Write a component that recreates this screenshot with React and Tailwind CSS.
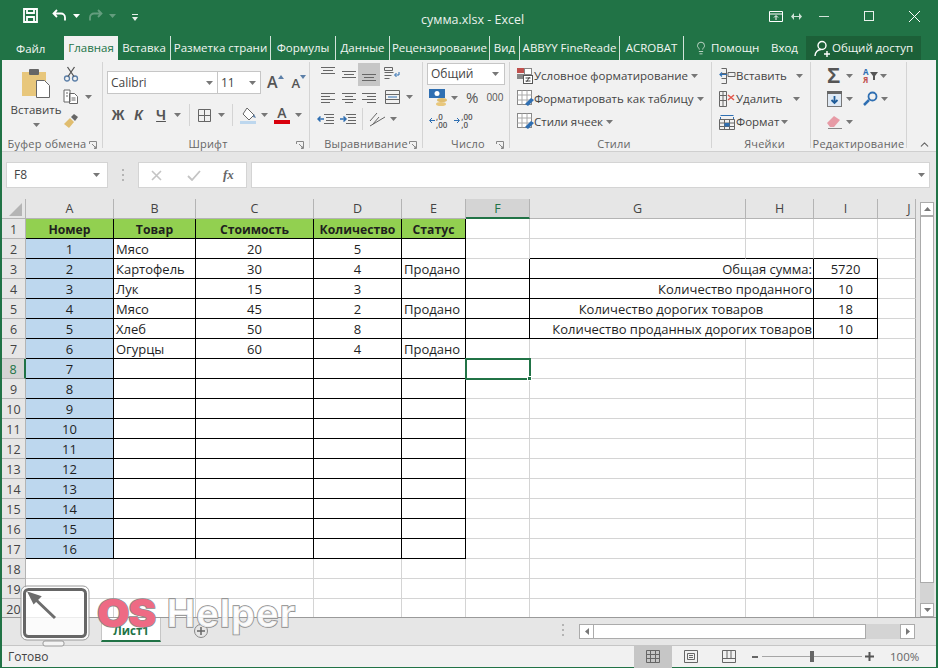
import { Fragment } from 'react'
import { ChevronUp, Lightbulb } from 'lucide-react'

const FONT = "font-['Open_Sans','Noto_Sans',sans-serif]"

const COLS = ['A', 'B', 'C', 'D', 'E', 'F', 'G', 'H', 'I', 'J']
const DATA = [
  ['Мясо', 20, 5, ''],
  ['Картофель', 30, 4, 'Продано'],
  ['Лук', 15, 3, ''],
  ['Мясо', 45, 2, 'Продано'],
  ['Хлеб', 50, 8, ''],
  ['Огурцы', 60, 4, 'Продано'],
]
const SUMMARY = {
  3: ['Общая сумма:', 5720, 'text-right'],
  4: ['Количество проданного', 10, 'text-right'],
  5: ['Количество дорогих товаров', 18, 'text-center'],
  6: ['Количество проданных дорогих товаров', 10, 'text-right'],
}
const HEAD = ['Номер', 'Товар', 'Стоимость', 'Количество', 'Статус']

const Caret = ({ className = '' }) => (
  <svg width="7" height="4" viewBox="0 0 7 4" className={className}><path d="M0 0h7L3.500 4z" fill="#777" /></svg>
)

const Lines = ({ rows, w = 14 }) => (
  <svg width={w} height="13" viewBox={`0 0 ${w} 13`} fill="none" stroke="#666" strokeWidth="1">
    {rows.map(([x1, x2, y], i) => <path key={i} d={`M${x1} ${y}.5H${x2}`} />)}
  </svg>
)

function TitleBar() {
  return (
    <div className="flex h-[36px] items-center bg-[#217346] text-white">
      <div className="-mt-[5px] flex w-[421px] items-center pl-[23px]">
        <svg width="15" height="15" viewBox="0 0 15 15" fill="none" stroke="#fff" strokeWidth="1.800">
          <path d="M1 1h13v13H1zM4 1v4h7V1M4 14V9h7v5" />
        </svg>
        <svg className="ml-[14px]" width="15" height="13" viewBox="0 0 15 13" fill="none" stroke="#fff" strokeWidth="1.800">
          <path d="M5 1L1.500 4.500 5 8M2 4.500h7a4 4 0 0 1 4 4v3" />
        </svg>
        <Caret className="ml-[6px] [&>path]:fill-white" />
        <svg className="ml-[8px] opacity-30" width="15" height="13" viewBox="0 0 15 13" fill="none" stroke="#fff" strokeWidth="1.800">
          <path d="M10 1l3.500 3.500L10 8M13 4.500H6a4 4 0 0 0-4 4v3" />
        </svg>
        <Caret className="ml-[6px] opacity-30 [&>path]:fill-white" />
        <svg className="ml-[16px] mt-[3px]" width="6" height="7" viewBox="0 0 6 7"><path d="M0 0h6v1H0zM0 3h6L3 7z" fill="#e6efe9" /></svg>
      </div>
      <div className={`${FONT} mt-[5px] w-[348px] whitespace-nowrap text-[12.500px] text-[#e9f1ec]`}>сумма.xlsx - Excel</div>
      <div className="-mt-[4px] flex items-center">
        <svg width="14" height="11" viewBox="0 0 14 11" fill="none" stroke="#fff"><path d="M.5.500h13v10H.500zM.5 3h13M7 9V5M5 6.500L7 4.500 9 6.500" /></svg>
        <svg className="ml-[8px]" width="11" height="7" viewBox="0 0 11 7" fill="#cfe0d6"><path d="M0 3.500L3 0v3h5V0l3 3.500L8 7V4H3v3z" /></svg>
        <div className="ml-[17px] h-px w-[10px] bg-white/80" />
        <div className="ml-[35px] h-[10px] w-[10px] border border-white/90" />
        <svg className="ml-[35px]" width="11" height="11" viewBox="0 0 11 11" stroke="#fff"><path d="M0 0l11 11M11 0L0 11" /></svg>
      </div>
    </div>
  )
}

function Tabs() {
  const Tab = ({ w, children }) => (
    <div className={`flex h-[24px] items-center justify-center whitespace-nowrap border-r border-[#d3e3da] ${w}`}>
      {children}
    </div>
  )
  return (
    <div className={`${FONT} flex h-[24px] items-center bg-[#217346] text-[11.500px] text-[#f2f6f3]`}>
      <div className="w-[64px] pl-[16px] pt-[2px]">Файл</div>
      <div className="flex h-[24px] w-[54px] items-center justify-center bg-[#f1f1f1] text-[#217346]">Главная</div>
      <Tab w="w-[53px]">Вставка</Tab>
      <Tab w="w-[100px]">Разметка страни</Tab>
      <Tab w="w-[65px]">Формулы</Tab>
      <Tab w="w-[54px]">Данные</Tab>
      <Tab w="w-[100px]">Рецензирование</Tab>
      <Tab w="w-[30px]">Вид</Tab>
      <Tab w="w-[100px]">ABBYY FineReade</Tab>
      <Tab w="w-[64px]">ACROBAT</Tab>
      <Lightbulb className="ml-[10px] text-[#e8efe9]" size={14} strokeWidth={1.300} />
      <div className="ml-[3px] w-[60px] whitespace-nowrap">Помощн</div>
      <div className="w-[35px]">Вход</div>
      <div className="flex h-[24px] w-[115px] items-center bg-[#1c6038] pl-[8px]">
        <svg width="17" height="17" viewBox="0 0 17 17" fill="none" stroke="#fff" strokeWidth="1.400">
          <circle cx="8" cy="5.500" r="4" /><path d="M1 16c0-4 3-6.500 6-6.500M10 14h6M13 11v6" />
        </svg>
        <span className="ml-[1px] whitespace-nowrap">Общий доступ</span>
      </div>
    </div>
  )
}

const Group = ({ w, label, launcher, children }) => (
  <div className={`flex h-[86px] flex-col border-r border-[#d4d4d4] ${w}`}>
    <div className="h-[72px] shrink-0">{children}</div>
    <div className="relative mt-[2px] shrink-0 text-center text-[11px] leading-[16px] tracking-[0.200px] text-[#666]">
      {label}
      {launcher && (
        <svg className="absolute right-[5px] top-[5px]" width="8" height="8" viewBox="0 0 8 8" fill="none" stroke="#888"><path d="M.5 3V.5H7.500V7.500H5M3 3l4 4M5 7h2V5" /></svg>
      )}
    </div>
  </div>
)

function Clipboard() {
  return (
    <Group w="w-[99px] pl-[6px]" label={<span className="-ml-[6px] block pr-[12px]">Буфер обмена</span>} launcher>
      <div className="flex">
        <div className="flex w-[52px] flex-col items-center">
          <svg className="mt-[6px]" width="29" height="31" viewBox="0 0 29 31">
            <rect x="0" y="4" width="24" height="24" fill="#e8c77c" />
            <rect x="7" y="1" width="10" height="6" rx="1" fill="#666" />
            <path d="M14.500 12.500h8l5 5v12h-13z" fill="#fff" stroke="#666" />
          </svg>
          <div className="mt-[3px] text-[11.500px] leading-[16px] text-[#444]">Вставить</div>
          <Caret className="mt-[5px]" />
        </div>
        <div className="ml-[1px] mt-[4px] flex flex-col">
          <svg width="16" height="16" viewBox="0 0 16 16" fill="none" stroke="#5b7fa8" strokeWidth="1.300">
            <circle cx="4" cy="12.500" r="2.500" /><circle cx="12" cy="12.500" r="2.500" />
            <path d="M5 10.500L11.500 1M11 10.500L4.500 1" stroke="#555" />
          </svg>
          <div className="mt-[7px] flex items-center">
            <svg width="16" height="16" viewBox="0 0 16 16" fill="#fff" stroke="#666"><path d="M1 1h6v12H1zM6.500 4.500h5l3 3v7h-8z" /><path d="M3 4h2M3 7h2M8.500 9h4M8.500 11h4" fill="none" /></svg>
            <Caret className="ml-[6px]" />
          </div>
          <svg className="mt-[8px]" width="16" height="16" viewBox="0 0 16 16">
            <path d="M1 11l6-6 4 4-5 6z" fill="#e0bd6f" /><path d="M8 4l3-3 4 3-3 4z" fill="#666" />
          </svg>
        </div>
      </div>
    </Group>
  )
}

function FontGroup() {
  return (
    <Group w="w-[207px] pl-[4px]" label="Шрифт" launcher>
      <div className="mt-[9px] flex items-start">
        <div className="flex h-[23px] w-[111px] items-center border border-[#c6c6c6] bg-white pl-[3px] text-[12px] text-[#444]">
          Calibri<Caret className="ml-auto mr-[4px]" />
        </div>
        <div className="flex h-[23px] w-[43px] items-center border border-l-0 border-[#c6c6c6] bg-white pl-[3px] text-[12px] text-[#444]">
          11<Caret className="ml-auto mr-[4px]" />
        </div>
        <div className="ml-[6px] flex items-start">
          <span className="text-[16px] font-semibold leading-[22px] text-[#555]">A</span>
          <svg className="mt-[4px]" width="6" height="4" viewBox="0 0 6 4"><path d="M3 0l3 4H0z" fill="#5b7fa8" /></svg>
        </div>
        <div className="ml-[8px] flex items-start">
          <span className="mt-[2px] text-[13px] font-semibold leading-[20px] text-[#555]">A</span>
          <svg className="mt-[4px]" width="6" height="4" viewBox="0 0 6 4"><path d="M0 0h6L3 4z" fill="#5b7fa8" /></svg>
        </div>
      </div>
      <div className="mt-[8px] flex h-[26px] items-center text-[#555]">
        <span className="w-[22px] text-center font-['Liberation_Sans',sans-serif] text-[14px] font-bold">Ж</span>
        <span className="w-[19px] text-center font-['Liberation_Sans',sans-serif] text-[14px] font-bold italic">К</span>
        <span className="w-[26px] text-center font-['Liberation_Sans',sans-serif] text-[14px] font-bold underline">Ч</span>
        <Caret />
        <div className="ml-[8px] h-[22px] w-px bg-[#d4d4d4]" />
        <svg className="ml-[8px]" width="13" height="13" viewBox="0 0 13 13" fill="none" stroke="#666"><path d="M.5.500h12v12H.500zM6.500.500v12M.5 6.500h12" /></svg>
        <Caret className="ml-[7px]" />
        <div className="ml-[7px] h-[22px] w-px bg-[#d4d4d4]" />
        <svg className="ml-[7px]" width="17" height="17" viewBox="0 0 17 17">
          <path d="M7 1l7 7-5 5-6-6z" fill="#fff" stroke="#666" /><path d="M14 7l2 4-3-1z" fill="#5b7fa8" /><rect y="14" width="16" height="3" fill="#bdd7ee" />
        </svg>
        <Caret className="ml-[4px]" />
        <div className="ml-[6px] flex w-[16px] flex-col items-center">
          <span className="text-[14px] font-semibold leading-[14px] text-[#555]">A</span>
          <div className="h-[4px] w-[16px] bg-[#d8000c]" />
        </div>
        <Caret className="ml-[5px]" />
      </div>
    </Group>
  )
}

function Alignment() {
  const Cell = ({ children, className = 'w-[22px]' }) => <div className={`flex h-[22px] items-center justify-center ${className}`}>{children}</div>
  return (
    <Group w="w-[113px]" label="Выравнивание" launcher>
      <div className="ml-[7px] mt-[1px] flex">
        <Cell className="w-[22px] pb-[3px]"><Lines rows={[[0, 14, 1], [2, 12, 4], [0, 14, 7]]} /></Cell>
        <Cell className="w-[19px]"><Lines rows={[[0, 14, 3], [2, 12, 6], [0, 14, 9]]} /></Cell>
        <Cell className="h-[23px] w-[22px] bg-[#c6c6c6]"><Lines rows={[[0, 14, 6], [2, 12, 9], [0, 14, 12]]} /></Cell>
        <Cell className="w-[24px]">
          <svg width="16" height="15" viewBox="0 0 16 15" fill="none" stroke="#666"><path d="M.5.500h8v3h-8zM.5 5.500h9M.5 8.500h7M.5 11.500h5" /><path d="M15 5v3h-4M12.500 6L10.500 8 12.500 10" stroke="#2f6fb2" /></svg>
        </Cell>
      </div>
      <div className="ml-[7px] flex">
        <Cell><Lines rows={[[0, 14, 2], [0, 9, 5], [0, 14, 8], [0, 9, 11]]} /></Cell>
        <Cell className="w-[19px]"><Lines rows={[[0, 14, 2], [3, 11, 5], [0, 14, 8], [3, 11, 11]]} /></Cell>
        <Cell><Lines rows={[[0, 14, 2], [5, 14, 5], [0, 14, 8], [5, 14, 11]]} /></Cell>
        <Cell className="w-[24px]">
          <svg width="15" height="14" viewBox="0 0 15 14" fill="none" stroke="#666"><path d="M.5.500h14v13H.500zM.5 4.500h14M.5 9.500h14" /><path d="M3 7h9" stroke="#2f6fb2" /></svg>
        </Cell>
        <Caret className="mt-[9px] ml-[2px]" />
      </div>
      <div className="ml-[4px] flex items-center">
        <Cell>
          <svg width="17" height="13" viewBox="0 0 17 13" fill="none" stroke="#666"><path d="M7 1.500h10M9 4.500h8M9 7.500h8M7 10.500h10" /><path d="M7 6H1M3.500 3.500L1 6l2.500 2.500" stroke="#2f6fb2" strokeWidth="1.500" /></svg>
        </Cell>
        <Cell>
          <svg width="17" height="13" viewBox="0 0 17 13" fill="none" stroke="#666"><path d="M7 1.500h10M9 4.500h8M9 7.500h8M7 10.500h10" /><path d="M1 6h6M4.500 3.500L7 6 4.500 8.500" stroke="#2f6fb2" strokeWidth="1.500" /></svg>
        </Cell>
        <div className="ml-[4px] h-[22px] w-px bg-[#d4d4d4]" />
        <svg className="ml-[6px]" width="17" height="15" viewBox="0 0 17 15" fill="none" stroke="#666"><path d="M1 9L8 1M4 12l6-7M1 14L16 5" /></svg>
        <Caret className="ml-[4px]" />
      </div>
    </Group>
  )
}

function NumberGroup() {
  return (
    <Group w="w-[87px] pl-[4px]" label="Число" launcher>
      <div className="mt-[1px] flex h-[22px] w-[78px] items-center border border-[#c6c6c6] bg-white pl-[3px] text-[12px] text-[#444]">
        Общий<Caret className="ml-auto mr-[5px]" />
      </div>
      <div className="mt-[1px] flex h-[23px] items-center">
        <svg className="ml-[2px]" width="19" height="18" viewBox="0 0 19 18">
          <rect width="16" height="9" fill="#2f6fb2" /><circle cx="8" cy="4.500" r="2.500" fill="#fff" /><ellipse cx="13" cy="11" rx="5" ry="2" fill="#e0bd6f" /><ellipse cx="12" cy="15" rx="5" ry="2" fill="#e8c77c" />
        </svg>
        <Caret className="ml-[3px]" />
        <span className="ml-[8px] text-[15px] text-[#555]">%</span>
        <span className="ml-[8px] text-[10px] text-[#555]">000</span>
      </div>
      <div className="flex h-[23px] items-center pl-[2px] text-[8px] font-semibold text-[#555]">
        <svg width="6" height="7" viewBox="0 0 6 7" fill="none" stroke="#2f6fb2"><path d="M6 3.500H1M3 1L.5 3.500 3 6" /></svg>
        <div className="ml-[1px] flex h-[16px] flex-col justify-between leading-[8px]"><span>,0</span><span>,00</span></div>
        <svg className="ml-[7px]" width="6" height="7" viewBox="0 0 6 7" fill="none" stroke="#2f6fb2"><path d="M0 3.500h5M3 1l2.500 2.500L3 6" /></svg>
        <div className="ml-[1px] flex h-[16px] flex-col justify-between leading-[8px]"><span>,00</span><span>,0</span></div>
      </div>
    </Group>
  )
}

const StyleRow = ({ icon, label, caretClass = 'ml-[3px]' }) => (
  <div className="flex h-[23px] items-center text-[11.500px] text-[#444]">
    <div className="flex w-[17px] shrink-0">{icon}</div>
    <span className="whitespace-nowrap">{label}</span>
    <Caret className={caretClass} />
  </div>
)

function Styles() {
  const table = (
    <svg width="17" height="17" viewBox="0 0 17 17">
      <rect x=".5" y=".5" width="14" height="14" fill="#fff" stroke="#888" />
      <path d="M.5 5h14M.5 10h14M5 .5v14M10 .5v14" stroke="#aaa" />
      <path d="M8 14l6-6 3 2-6 6z" fill="#2f6fb2" />
    </svg>
  )
  return (
    <Group w="w-[202px] pl-[7px]" label="Стили">
      <div className="mt-[2px]">
        <StyleRow label="Условное форматирование" icon={
          <svg width="16" height="16" viewBox="0 0 16 16">
            <rect width="7" height="5" fill="#c0504d" /><rect x="7.500" y=".5" width="7" height="6" fill="#fff" stroke="#888" /><rect y="6" width="7" height="5" fill="#888" />
            <rect x="6.500" y="7.500" width="9" height="8" fill="#fff" stroke="#555" /><path d="M8.500 10h5M8.500 13h5M12.500 9l-3 5" stroke="#444" fill="none" />
          </svg>
        } />
        <StyleRow label="Форматировать как таблицу" icon={table} />
        <StyleRow label="Стили ячеек" icon={table} />
      </div>
    </Group>
  )
}

function Cells() {
  return (
    <Group w="w-[99px] pl-[7px]" label="Ячейки">
      <div className="mt-[2px]">
        <StyleRow label="Вставить" caretClass="ml-[9px]" icon={
          <svg width="17" height="16" viewBox="0 0 17 16" fill="none" stroke="#666"><path d="M2.500.500h5v15h-5M7.500 5.500h-5M7.500 10.500h-5M9 4.500h7v4H9z" /><path d="M8 6.500H1M3 4.500L1 6.500 3 8.500" stroke="#2f6fb2" strokeWidth="1.200" /></svg>
        } />
        <StyleRow label="Удалить" caretClass="ml-[11px]" icon={
          <svg width="17" height="16" viewBox="0 0 17 16" fill="none" stroke="#666"><path d="M.5.500h7v4h-7zM.5 4.500h7v5h-7zM.5 9.500h7v6h-7zM4 .5v15" /><path d="M9 4l6 5M15 4l-6 5" stroke="#e2574c" strokeWidth="1.500" /></svg>
        } />
        <StyleRow label="Формат" caretClass="ml-[2px]" icon={
          <svg width="16" height="16" viewBox="0 0 16 16" fill="none" stroke="#666"><path d="M1.500 1.500h13M1.500 3v2M14.500 3v2" stroke="#2f6fb2" /><path d="M.5 5.500h15v10H.500zM.5 9h15M.5 12.500h15M5.500 5.500v10M10.500 5.500v10" /><rect x="5.500" y="9" width="5" height="3.500" fill="#2f6fb2" stroke="none" /></svg>
        } />
      </div>
    </Group>
  )
}

function Editing() {
  return (
    <Group w="w-[96px]" label="Редактирование">
      <div className="ml-[16px] mt-[2px] grid grid-cols-[36px_30px] items-center">
        <div className="flex h-[23px] items-center">
          <span className="font-['Liberation_Sans',sans-serif] text-[22px] font-bold leading-[22px] text-[#555]">Σ</span><Caret className="ml-[6px]" />
        </div>
        <div className="flex h-[23px] items-center">
          <div className="text-center text-[8px] font-bold leading-[8px]"><div className="text-[#2f6fb2]">А</div><div className="text-[#c0504d]">Я</div></div>
          <svg className="ml-[1px]" width="8" height="8" viewBox="0 0 8 8"><path d="M0 0h8L5 4v4H3V4z" fill="#555" /></svg>
          <Caret className="ml-[2px]" />
        </div>
        <div className="flex h-[23px] items-center">
          <svg width="15" height="16" viewBox="0 0 15 16"><rect x=".5" y=".5" width="14" height="15" fill="#dfe9f4" stroke="#777" /><rect width="15" height="3" fill="#666" /><path d="M7.500 5v7M4.500 9l3 3 3-3" stroke="#1f5c99" strokeWidth="1.800" fill="none" /></svg>
          <Caret className="ml-[4px]" />
        </div>
        <div className="flex h-[23px] items-center">
          <svg width="15" height="15" viewBox="0 0 15 15" fill="none" stroke="#2f6fb2" strokeWidth="1.800"><circle cx="9.500" cy="5.500" r="4" /><path d="M6 9l-5 5" strokeWidth="2.500" /></svg>
          <Caret className="ml-[3px]" />
        </div>
        <div className="flex h-[23px] items-center">
          <svg width="15" height="14" viewBox="0 0 15 14"><path d="M0 8l7-7 6 4-6 7H3z" fill="#e79ba6" /><path d="M1 13.500h14" stroke="#888" /></svg>
          <Caret className="ml-[4px]" />
        </div>
      </div>
    </Group>
  )
}

function Ribbon() {
  return (
    <div className={`${FONT} flex h-[92px] items-start border-b border-[#cfcfcf] bg-[#f1f1f1] pt-[2px] pl-[2px]`}>
      <Clipboard />
      <FontGroup />
      <Alignment />
      <NumberGroup />
      <Styles />
      <Cells />
      <Editing />
      <ChevronUp className="ml-[11px] mt-[76px] text-[#666]" size={13} strokeWidth={2} />
    </div>
  )
}

function FormulaBar() {
  return (
    <div className={`${FONT} flex h-[47px] items-start bg-[#e6e6e6] pl-[4px] pt-[10px] pr-[6px]`}>
      <div className="flex h-[26px] w-[102px] items-center border border-[#d4d4d4] bg-white pl-[7px] text-[12px] text-[#444]">
        F8<Caret className="ml-auto mr-[7px]" />
      </div>
      <div className="ml-[14px] mt-[7px] flex h-[12px] w-[2px] flex-col justify-between">
        <span className="h-[2px] bg-[#b4b4b4]" /><span className="h-[2px] bg-[#b4b4b4]" /><span className="h-[2px] bg-[#b4b4b4]" />
      </div>
      <div className="ml-[14px] flex h-[26px] w-[109px] items-center border border-[#d4d4d4] bg-white">
        <svg className="ml-[12px]" width="11" height="11" viewBox="0 0 11 11" stroke="#c4c4c4" strokeWidth="1.600"><path d="M1 1l9 9M10 1l-9 9" /></svg>
        <svg className="ml-[25px]" width="14" height="11" viewBox="0 0 14 11" fill="none" stroke="#c4c4c4" strokeWidth="1.800"><path d="M1 6l4 4 8-9" /></svg>
        <span className="ml-[22px] font-['Liberation_Serif',serif] text-[13px] font-bold italic text-[#666]">fx</span>
      </div>
      <div className="ml-[4px] flex h-[26px] w-[680px] items-center border border-[#d4d4d4] bg-white">
        <Caret className="ml-auto mr-[4px]" />
      </div>
    </div>
  )
}

function Sheet() {
  const gray = 'border-r border-b border-[#d4d4d4]'
  const black = 'border-r border-b border-black'
  const rows = Array.from({ length: 20 }, (_, i) => i + 1)

  return (
    <div className="flex h-[418px] overflow-hidden bg-[#e6e6e6]">
      <div className={`${FONT} grid h-[420px] w-[914px] shrink-0 grid-cols-[24px_88px_82px_118px_88px_64px_64px_216px_68px_64px_38px] auto-rows-[20px] bg-white text-[13px] leading-[21px] text-[#1f1f1f]`}>
        <div className="flex items-end justify-end border-r border-b border-[#b4b4b4] bg-[#e6e6e6] pb-[2px] pr-[3px]">
          <svg width="13" height="13" viewBox="0 0 13 13"><path d="M13 0v13H0z" fill="#b4b4b4" /></svg>
        </div>
        {COLS.map(c => (
          <div key={c} className={`border-r border-[#b4b4b4] text-[12.500px] leading-[19px] ${c === 'F' ? 'border-b-2 border-b-[#217346] bg-[#d4d4d4] text-center text-[#217346]' : 'border-b bg-[#e6e6e6] text-center text-[#444]'} ${c === 'J' ? 'pl-[25px]' : ''}`}>{c}</div>
        ))}
        {rows.map(r => {
          const sum = SUMMARY[r]
          const d = DATA[r - 2]
          const inTable = r <= 17
          const topOfSummary = r === 2
          return (
            <Fragment key={r}>
              <div className={`text-center text-[12.500px] ${r === 8 ? 'border-r-2 border-b border-r-[#217346] border-b-[#b4b4b4] bg-[#d4d4d4] text-[#217346]' : 'border-r border-b border-[#b4b4b4] bg-[#e6e6e6] text-[#444]'}`}>{r}</div>
              {r === 1 ? HEAD.map(h => (
                <div key={h} className={`${black} whitespace-nowrap bg-[#92d050] text-center text-[12.200px] font-bold`}>{h}</div>
              )) : (
                <>
                  <div className={`${inTable ? black : gray} text-center ${inTable ? 'bg-[#bdd7ee]' : ''}`}>{inTable ? r - 1 : ''}</div>
                  <div className={`${inTable ? black : gray} pl-[2px]`}>{d ? d[0] : ''}</div>
                  <div className={`${inTable ? black : gray} text-center`}>{d ? d[1] : ''}</div>
                  <div className={`${inTable ? black : gray} text-center`}>{d ? d[2] : ''}</div>
                  <div className={`${inTable ? black : gray} pl-[2px]`}>{d ? d[3] : ''}</div>
                </>
              )}
              <div className={`relative ${sum ? black : gray}`}>
                {r === 8 && (
                  <div className="absolute -left-[1px] -top-[1px] z-10 h-[22px] w-[66px] border-2 border-[#217346]">
                    <div className="absolute -bottom-[3px] -right-[3px] h-[5px] w-[5px] border border-white bg-[#217346]" />
                  </div>
                )}
              </div>
              {sum ? (
                <>
                  <div className={`${black} col-span-2 whitespace-nowrap pr-[1px] ${sum[2]}`}>{sum[0]}</div>
                  <div className={`${black} text-center`}>{sum[1]}</div>
                </>
              ) : (
                <>
                  <div className={topOfSummary ? 'border-r border-b border-r-[#d4d4d4] border-b-black' : gray} />
                  <div className={topOfSummary ? 'border-r border-b border-r-[#d4d4d4] border-b-black' : gray} />
                  <div className={topOfSummary ? 'border-r border-b border-r-[#d4d4d4] border-b-black' : gray} />
                </>
              )}
              <div className="border-r border-b border-r-[#a6a6a6] border-b-[#d4d4d4]" />
            </Fragment>
          )
        })}
      </div>
      <div className="ml-[4px] flex h-[418px] w-[14px] flex-col pt-[3px]">
        <div className="flex h-[14px] items-center justify-center border border-[#ababab] bg-white">
          <svg width="7" height="4" viewBox="0 0 7 4"><path d="M3.500 0L7 4H0z" fill="#777" /></svg>
        </div>
        <div className="h-[367px] border border-[#ababab] bg-white" />
        <div className="flex-1 bg-[#d4d4d4]" />
        <div className="flex h-[14px] items-center justify-center border border-[#ababab] bg-white"><Caret /></div>
      </div>
    </div>
  )
}

function SheetTabs() {
  return (
    <div className={`${FONT} flex h-[28px] items-start border-t border-[#9a9a9a] bg-[#e6e6e6]`}>
      <div className="ml-[99px] flex h-[24px] w-[60px] items-center justify-center border-x border-b-2 border-x-[#c6c6c6] border-b-[#217346] bg-white pt-[4px] text-[11.500px] font-bold text-[#217346]">Лист1</div>
      <div className="ml-[33px] mt-[6px] flex h-[14px] w-[14px] items-center justify-center rounded-full border border-[#888] text-[#666]">
        <svg width="8" height="8" viewBox="0 0 8 8" stroke="#666" strokeWidth="1.500"><path d="M4 0v8M0 4h8" /></svg>
      </div>
      <div className="ml-[354px] mt-[6px] flex h-[12px] w-[2px] flex-col justify-between">
        <span className="h-[2px] bg-[#b4b4b4]" /><span className="h-[2px] bg-[#b4b4b4]" /><span className="h-[2px] bg-[#b4b4b4]" />
      </div>
      <div className="ml-[15px] mt-[6px] flex h-[15px] w-[336px]">
        <div className="flex w-[15px] items-center justify-center border border-[#ababab] bg-white">
          <svg width="4" height="7" viewBox="0 0 4 7"><path d="M4 0v7L0 3.500z" fill="#777" /></svg>
        </div>
        <div className="w-[272px] border-y border-r border-[#ababab] bg-white" />
        <div className="flex-1 bg-[#d4d4d4]" />
        <div className="flex w-[15px] items-center justify-center border border-[#ababab] bg-white">
          <svg width="4" height="7" viewBox="0 0 4 7"><path d="M0 0v7l4-3.500z" fill="#777" /></svg>
        </div>
      </div>
    </div>
  )
}

function StatusBar() {
  return (
    <div className={`${FONT} flex h-[22px] items-center border-t border-[#c6c6c6] bg-[#f1f1f1] text-[12px] text-[#444]`}>
      <span className="ml-[6px] w-[40px]">Готово</span>
      <div className="ml-[586px] flex h-[22px] w-[38px] items-center justify-center bg-[#c6c6c6]">
        <svg width="14" height="13" viewBox="0 0 14 13" fill="none" stroke="#666"><path d="M.5.500h13v12H.500zM.5 4.500h13M.5 8.500h13M4.500.5v12M9.500.5v12" /></svg>
      </div>
      <svg className="ml-[12px]" width="14" height="13" viewBox="0 0 14 13" fill="none" stroke="#666"><path d="M.5.500h13v12H.500zM3.500 3.500h7v6h-7zM5 5.500h4M5 7.500h4" /></svg>
      <svg className="ml-[24px]" width="14" height="13" viewBox="0 0 14 13" fill="none" stroke="#666"><path d="M.5.500h13v12H.500zM.5 8.500h13M5 .5v8M9 .5v8" /></svg>
      <div className="ml-[16px] h-[2px] w-[6px] bg-[#666]" />
      <div className="ml-[4px] flex w-[100px] items-center">
        <div className="h-px w-[48px] bg-[#a6a6a6]" />
        <div className="h-[11px] w-[4px] bg-[#666]" />
        <div className="h-px w-[48px] bg-[#a6a6a6]" />
      </div>
      <svg className="ml-[3px]" width="9" height="9" viewBox="0 0 9 9" stroke="#555" strokeWidth="2"><path d="M4.500 0v9M0 4.500h9" /></svg>
      <span className="ml-[16px] text-[11.500px] text-[#666]">100%</span>
    </div>
  )
}

// watermark sits over the sheet and tab bar
function Watermark() {
  return (
    <div className="absolute left-[20px] top-[585px] flex items-start">
      <svg width="72" height="62" viewBox="0 0 72 62">
        <rect x="1" y="1" width="68" height="54" rx="6" fill="#ffffffd0" stroke="#9a9a9a" />
        <rect x="4.500" y="4.500" width="61" height="47" rx="4" fill="none" stroke="#666" strokeWidth="3" />
        <rect x="23" y="56" width="21" height="5" rx="2" fill="#f4f4f4" stroke="#9a9a9a" />
        <path d="M10 9l9 3-5 5zM13 12l22 21" fill="#6d6d6d" stroke="#6d6d6d" strokeWidth="3" />
      </svg>
      <span className="ml-[5px] mt-[6px] origin-left scale-x-[1.100] font-['Inter',sans-serif] text-[38px] font-black leading-[44px] tracking-[-1px] text-[#ee6a84] [-webkit-text-stroke:1.500px_#8a8a8a] [paint-order:stroke_fill]">OS</span>
      <span className="ml-[17px] mt-[6px] font-['Inter',sans-serif] text-[38px] font-bold leading-[44px] tracking-[1px] text-[#ffffffd0] [-webkit-text-stroke:1.500px_#8a8a8a] [paint-order:stroke_fill]">Helper</span>
    </div>
  )
}

export default function App() {
  return (
    <div className="relative h-[668px] w-[938px] overflow-hidden bg-[#217346]">
      <TitleBar />
      <Tabs />
      <div className="mx-[2px] mb-[1px] h-[607px] bg-[#e6e6e6]">
        <Ribbon />
        <FormulaBar />
        <Sheet />
        <SheetTabs />
        <StatusBar />
      </div>
      <Watermark />
    </div>
  )
}
